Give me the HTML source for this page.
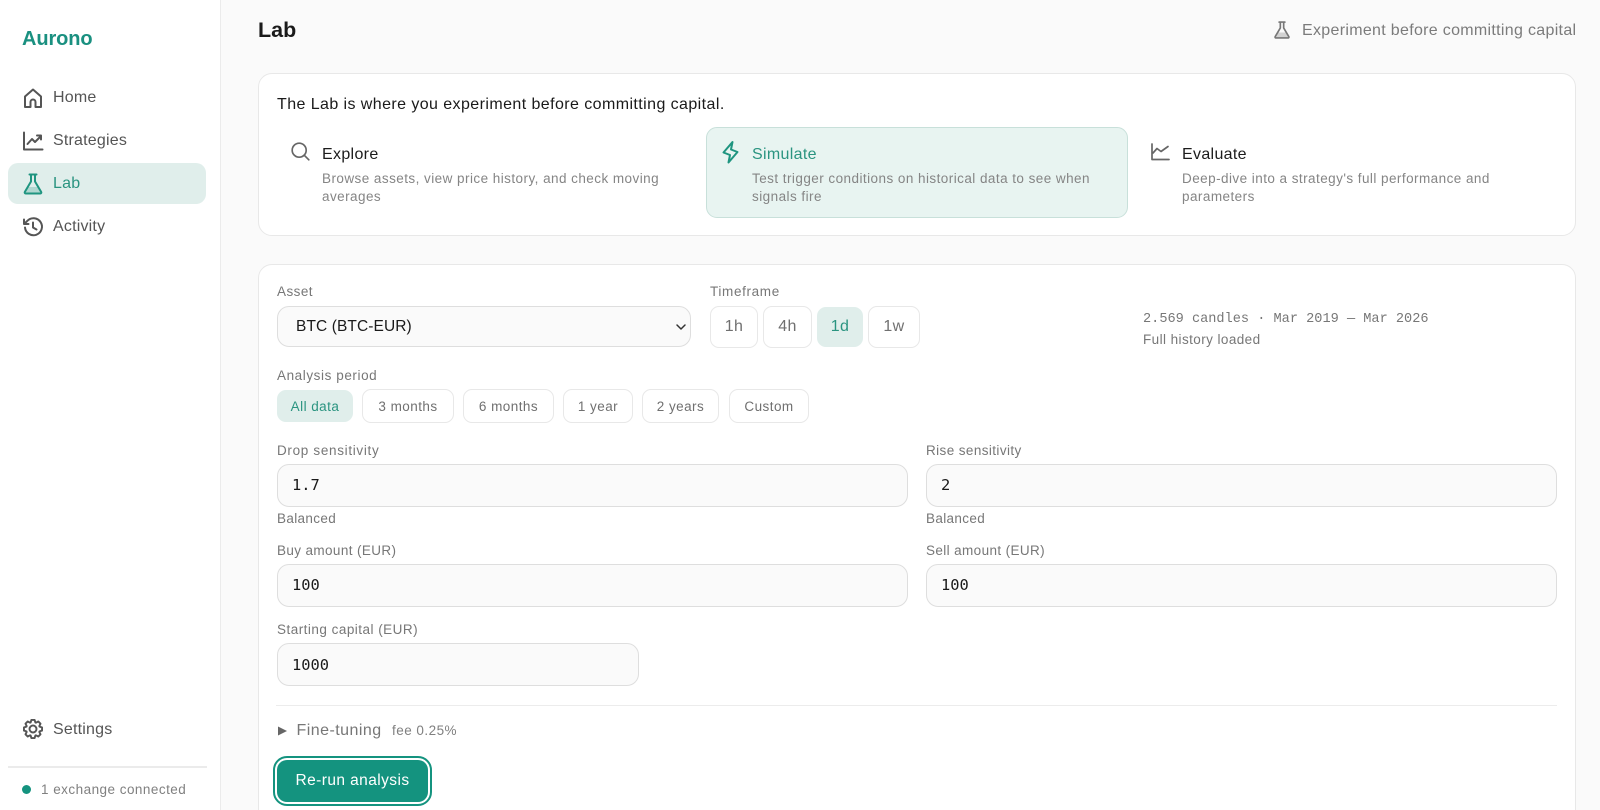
<!DOCTYPE html>
<html lang="en"><head><meta charset="utf-8"><title>Lab</title>
<style>
*{box-sizing:border-box;margin:0;padding:0}
html,body{width:1600px;height:810px;overflow:hidden;background:#fafafa}
body{position:relative;font-family:"Liberation Sans",sans-serif;color:#1a1a1a}
.t{position:absolute;white-space:nowrap;line-height:20px;height:20px}
.b{position:absolute;border:1px solid #e8e8e8;border-radius:10px;background:#fff}
.nav{font-size:16px;color:#555;letter-spacing:.2px}
.lbl{font-size:13.5px;color:#777;letter-spacing:.45px}
.title{font-size:16px;letter-spacing:.33px;color:#1c1c1c}
.desc{font-size:13.5px;color:#858585;letter-spacing:.45px}
.chip{position:absolute;border:1px solid #e8e8e8;border-radius:9px;background:#fff;color:#707070;font-size:13.5px;letter-spacing:.45px;text-align:center;display:flex;align-items:center;justify-content:center}
.chip.on{background:#e0eeeb;border-color:#e0eeeb;color:#2a9480}
.tf{font-size:16px;letter-spacing:.4px}
.inp{position:absolute;background:#fafafa;border:1.5px solid #dedede;border-radius:12px;font-family:"DejaVu Sans Mono",monospace;font-size:15.4px;color:#1a1a1a;padding-left:14px;padding-bottom:1px;display:flex;align-items:center}
svg{position:absolute;fill:none;stroke-linecap:round;stroke-linejoin:round}
</style></head><body>
<div style="position:absolute;left:0;top:0;width:221px;height:810px;background:#fff;border-right:1.5px solid #ebebeb"></div>
<div class="t" style="left:22px;top:29px;font-size:20px;font-weight:700;color:#1a9080;letter-spacing:-.1px">Aurono</div>
<div style="position:absolute;left:8px;top:163px;width:198px;height:41px;background:#e0eeeb;border-radius:10px"></div>

<svg style="left:21px;top:86px" width="24" height="24" viewBox="0 0 24 24" stroke="#555" stroke-width="2"><path d="M4 21V10.5L12 3.5l8 7V21h-5.5v-5a2.5 2.5 0 0 0-5 0v5z"/></svg>
<div class="t nav" style="left:53px;top:88px">Home</div>
<svg style="left:21px;top:129px" width="24" height="24" viewBox="0 0 24 24" stroke="#555" stroke-width="2"><path d="M3 3.5V20.5H21.5M6.5 15l4.500-5 3 3 6-6M16 6.500h4v4"/></svg>
<div class="t nav" style="left:53px;top:131px">Strategies</div>
<svg style="left:21px;top:172px" width="24" height="24" viewBox="0 0 24 24" stroke="#1f9580" stroke-width="2"><path d="M7.5 15h9l3 6H4.500z" fill="#1f9580" fill-opacity=".25" stroke="none"/><path d="M8.500 2.500h7M10 2.500v7L3.800 20a1 1 0 0 0 .9 1.500h14.600a1 1 0 0 0 .9-1.500L14 9.500v-7"/></svg>
<div class="t nav" style="left:53px;top:174px;color:#2a9480">Lab</div>
<svg style="left:21px;top:215px" width="24" height="24" viewBox="0 0 24 24" stroke="#555" stroke-width="2"><path d="M4 12.500A8.500 8.500 0 1 0 6.200 6L3 9M3 4.500V9h4.500M12 7.500V12.500l3.500 2"/></svg>
<div class="t nav" style="left:53px;top:217px">Activity</div>
<svg style="left:22px;top:718px" width="22" height="22" viewBox="0 0 24 24" stroke="#555" stroke-width="2.100"><path d="M19.140 9.400L21.850 10.260V13.740L19.140 14.600L18.890 15.210L20.190 17.740L17.740 20.190L15.210 18.890L14.600 19.140L13.740 21.850H10.260L9.400 19.140L8.790 18.890L6.260 20.190L3.810 17.740L5.110 15.210L4.860 14.600L2.150 13.740V10.260L4.860 9.400L5.110 8.790L3.810 6.260L6.260 3.810L8.790 5.110L9.400 4.860L10.260 2.150H13.740L14.600 4.860L15.210 5.110L17.740 3.810L20.190 6.260L18.890 8.790z"/><circle cx="12" cy="12" r="3.800"/></svg>
<div class="t nav" style="left:53px;top:720px">Settings</div>
<div style="position:absolute;left:8px;top:766px;width:199px;height:1.5px;background:#ebebeb"></div>
<div style="position:absolute;left:22px;top:785px;width:9px;height:9px;border-radius:50%;background:#14937f"></div>
<div class="t" style="left:41px;top:780px;font-size:13.500px;color:#808080;letter-spacing:.47px">1 exchange connected</div>

<div class="t" style="left:258px;top:20px;font-size:21.500px;font-weight:700;color:#1a1a1a">Lab</div>
<svg style="left:1272px;top:20px" width="20" height="20" viewBox="0 0 24 24" stroke="#777" stroke-width="2"><path d="M7.500 15h9l3 6H4.500z" fill="#777" fill-opacity=".3" stroke="none"/><path d="M8.500 2.500h7M10 2.500v7L3.800 20a1 1 0 0 0 .9 1.500h14.600a1 1 0 0 0 .9-1.500L14 9.500v-7"/></svg>
<div class="t" style="left:1302px;top:20px;font-size:16px;color:#7b7b7b;letter-spacing:.31px;margin-top:1px">Experiment before committing capital</div>

<div class="b" style="left:258px;top:73px;width:1318px;height:163px;border-radius:14px"></div>
<div class="t" style="left:277px;top:94.500px;font-size:16px;letter-spacing:.42px;color:#1a1a1a">The Lab is where you experiment before committing capital.</div>

<svg style="left:290px;top:141px" width="21" height="21" viewBox="0 0 24 24" stroke="#666" stroke-width="1.900"><circle cx="10.500" cy="10.500" r="8"/><path d="M16.500 16.500l5 5"/></svg>
<div class="t title" style="left:322px;top:145px">Explore</div>
<div class="t desc" style="left:322px;top:169px">Browse assets, view price history, and check moving</div>
<div class="t desc" style="left:322px;top:187px">averages</div>

<div class="b" style="left:706px;top:127px;width:422px;height:91px;background:#e8f4f1;border:1px solid #c8e0da;border-radius:11px"></div>
<svg style="left:718px;top:140px" width="24" height="24" viewBox="0 0 24 24" stroke="#1f9580" stroke-width="2"><path d="M14.500 2l-1.500 7.500 6.500 2.500-9 10.500 1.500-7.500-6.500-2.500z"/></svg>
<div class="t title" style="left:752px;top:145px;color:#2a9480">Simulate</div>
<div class="t desc" style="left:752px;top:169px">Test trigger conditions on historical data to see when</div>
<div class="t desc" style="left:752px;top:187px">signals fire</div>

<svg style="left:1149px;top:141px" width="22" height="22" viewBox="0 0 22 22" stroke="#666" stroke-width="1.700"><path d="M3 3V18.500H20M4 12l4-4.500 4 3 7-5"/></svg>
<div class="t title" style="left:1182px;top:145px">Evaluate</div>
<div class="t desc" style="left:1182px;top:169px">Deep-dive into a strategy's full performance and</div>
<div class="t desc" style="left:1182px;top:187px">parameters</div>

<div class="b" style="left:258px;top:264px;width:1318px;height:570px;border-radius:14px"></div>
<div class="t lbl" style="left:277px;top:282px">Asset</div>
<div class="inp" style="left:277px;top:306px;width:414px;height:41px;font-family:'Liberation Sans',sans-serif;font-size:15.500px;letter-spacing:.1px;padding-left:18px;padding-bottom:0;padding-top:1px">BTC (BTC-EUR)</div>
<svg style="left:674px;top:320px" width="14" height="14" viewBox="0 0 14 14" stroke="#333" stroke-width="1.500"><path d="M3 5l4 4 4-4"/></svg>

<div class="t lbl" style="left:710px;top:282px;letter-spacing:.65px">Timeframe</div>
<div class="chip tf" style="left:710px;top:306px;width:48px;height:42px">1h</div>
<div class="chip tf" style="left:763px;top:306px;width:49px;height:42px">4h</div>
<div class="chip tf on" style="left:817px;top:307px;width:46px;height:40px">1d</div>
<div class="chip tf" style="left:868px;top:306px;width:52px;height:42px">1w</div>
<div class="t" style="left:1143px;top:310px;font-family:'Liberation Mono',monospace;font-size:13.600px;color:#777">2.569 candles · Mar 2019 — Mar 2026</div>
<div class="t lbl" style="left:1143px;top:330px;letter-spacing:.42px">Full history loaded</div>

<div class="t lbl" style="left:277px;top:366px;letter-spacing:.58px">Analysis period</div>
<div class="chip on" style="left:277px;top:390px;width:76px;height:32px">All data</div>
<div class="chip" style="left:362px;top:389px;width:92px;height:34px">3 months</div>
<div class="chip" style="left:463px;top:389px;width:91px;height:34px">6 months</div>
<div class="chip" style="left:563px;top:389px;width:70px;height:34px">1 year</div>
<div class="chip" style="left:642px;top:389px;width:77px;height:34px">2 years</div>
<div class="chip" style="left:729px;top:389px;width:80px;height:34px">Custom</div>

<div class="t lbl" style="left:277px;top:440.500px;letter-spacing:.68px">Drop sensitivity</div>
<div class="inp" style="left:277px;top:464px;width:631px;height:43px">1.7</div>
<div class="t lbl" style="left:277px;top:509px;letter-spacing:.35px">Balanced</div>
<div class="t lbl" style="left:926px;top:440.500px;letter-spacing:.4px">Rise sensitivity</div>
<div class="inp" style="left:926px;top:464px;width:631px;height:43px">2</div>
<div class="t lbl" style="left:926px;top:509px;letter-spacing:.35px">Balanced</div>
<div class="t lbl" style="left:277px;top:540.500px;letter-spacing:.38px">Buy amount (EUR)</div>
<div class="inp" style="left:277px;top:564px;width:631px;height:43px">100</div>
<div class="t lbl" style="left:926px;top:540.500px;letter-spacing:.38px">Sell amount (EUR)</div>
<div class="inp" style="left:926px;top:564px;width:631px;height:43px">100</div>
<div class="t lbl" style="left:277px;top:620px;letter-spacing:.48px">Starting capital (EUR)</div>
<div class="inp" style="left:277px;top:643px;width:362px;height:43px;padding-bottom:0">1000</div>

<div style="position:absolute;left:276px;top:705px;width:1281px;height:1px;background:#ececec"></div>
<svg style="left:277px;top:725px" width="12" height="12" viewBox="0 0 12 12"><path d="M1 1.500L10 6 1 10.500z" fill="#666"/></svg>
<div class="t" style="left:296.500px;top:721px;font-size:16px;color:#777;letter-spacing:.46px">Fine-tuning</div>
<div class="t" style="left:392px;top:721px;font-size:13.500px;color:#808080;letter-spacing:.47px">fee 0.25%</div>
<div style="position:absolute;left:273px;top:756px;width:159px;height:50px;border:2px solid #14937f;border-radius:14px;background:#fff;padding:2px">
<div style="width:100%;height:100%;background:#14937f;border-radius:10px;color:#fff;font-size:15.500px;letter-spacing:.42px;display:flex;align-items:center;justify-content:center">Re-run analysis</div></div>
</body></html>
